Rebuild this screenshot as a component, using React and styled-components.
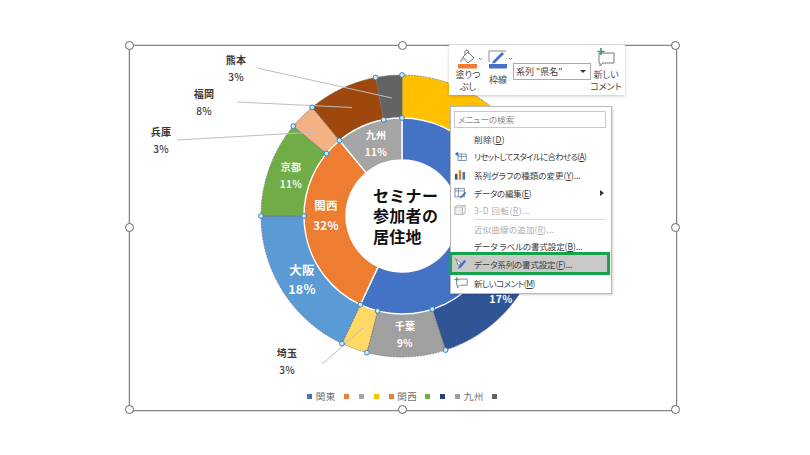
import React from 'react'
import styled, { createGlobalStyle } from 'styled-components'

const CX = 402
const CY = 216
const OUTER_R = 141
const MID_R = 98
const HOLE_R = 56

const outerSlices = [
   { pct: 28, color: '#ffc000' },
   { pct: 17, color: '#2f5597' },
   { pct: 9, color: '#a0a0a0' },
   { pct: 3, color: '#ffd966' },
   { pct: 18, color: '#5b9bd5' },
   { pct: 11, color: '#70ad47' },
   { pct: 3, color: '#f4b183' },
   { pct: 8, color: '#9e480e' },
   { pct: 3, color: '#636363' },
]

const innerSlices = [
   { pct: 57, color: '#4472c4' },
   { pct: 32, color: '#ed7d31' },
   { pct: 11, color: '#a5a5a5' },
]

const point = (r, pct) => {
   const a = (pct / 100) * Math.PI * 2
   return [CX + r * Math.sin(a), CY - r * Math.cos(a)]
}

const ringPath = (from, to, r1, r2) => {
   const large = to - from > 50 ? 1 : 0
   const [ax, ay] = point(r2, from)
   const [bx, by] = point(r2, to)
   const [cx, cy] = point(r1, to)
   const [dx, dy] = point(r1, from)
   return `M${ax} ${ay}A${r2} ${r2} 0 ${large} 1 ${bx} ${by}L${cx} ${cy}A${r1} ${r1} 0 ${large} 0 ${dx} ${dy}Z`
}

const withOffsets = (slices) => {
   let sum = 0
   return slices.map((s) => {
      const item = { ...s, from: sum, to: sum + s.pct }
      sum += s.pct
      return item
   })
}

const GlobalStyle = createGlobalStyle`
   html, body { margin: 0; background: #fff; }
   body { font-family: "Noto Sans CJK JP", "Noto Sans", sans-serif; color: #333; }
`

const Stage = styled.div`
   width: 810px;
   height: 455px;
   box-sizing: border-box;
   padding: 45px 0 0 129px;
   overflow: hidden;
`

const Frame = styled.div`
   position: relative;
   width: 548px;
   height: 366px;
   box-sizing: border-box;
   border: 1px solid #858585;
   box-shadow: 0 0 0 0.5px rgba(133, 133, 133, 0.5);
   display: flex;
   flex-direction: column;
`

const Chart = styled.svg`
   display: block;
   width: 545px;
   height: 340px;
   overflow: visible;
   flex: none;
`

const Handle = styled.span`
   position: absolute;
   left: ${(p) => p.$x}%;
   top: ${(p) => p.$y}%;
   width: 7px;
   height: 7px;
   margin: -5px 0 0 -5px;
   border: 1.5px solid #666;
   border-radius: 50%;
   background: #fff;
`

const Leader = styled.path`
   fill: none;
   stroke: #bdbdbd;
   stroke-width: 1;
`

const Marker = styled.circle`
   fill: #d6e6f5;
   stroke: #2e86c1;
   stroke-width: 1;
`

const Label = styled.text`
   font-size: ${(p) => p.$size || 10}px;
   font-weight: ${(p) => (p.$bold ? 700 : 500)};
   fill: ${(p) => p.$color || '#3a3a3a'};
   text-anchor: middle;
   letter-spacing: 0.3px;
`

const CenterTitle = styled.text`
   font-size: 16px;
   font-weight: 700;
   fill: #111;
   letter-spacing: 0.3px;
`

const Legend = styled.div`
   display: flex;
   align-items: center;
   justify-content: center;
   gap: 8px;
   height: 20px;
   font-size: 9.5px;
   letter-spacing: 0.5px;
   color: #707070;
`

const LegendItem = styled.span`
   display: flex;
   align-items: center;
   gap: 3.5px;
   min-width: 7px;
   &::before {
      content: '';
      width: 5px;
      height: 5px;
      background: ${(p) => p.$color};
   }
`

const Toolbar = styled.div`
   position: absolute;
   left: 319px;
   top: -1px;
   width: 176px;
   height: 50px;
   box-sizing: border-box;
   background: #fff;
   box-shadow: 0 1px 3px rgba(0, 0, 0, 0.22);
   display: flex;
   padding-left: 7px;
   font-size: 9px;
   font-feature-settings: "palt";
   color: #444;
`

const ToolButton = styled.div`
   width: ${(p) => p.$w}px;
   margin-left: ${(p) => p.$left || 0}px;
   flex: none;
   display: flex;
   flex-direction: column;
   align-items: center;
   text-align: center;
   line-height: 12px;
   padding-top: 3px;
   white-space: nowrap;
   svg { display: block; flex: none; overflow: visible; margin-bottom: ${(p) => p.$gap || 0}px; }
`

const SeriesSelect = styled.div`
   width: 78px;
   height: 17px;
   flex: none;
   box-sizing: border-box;
   margin-top: 18px;
   padding: 0 4px 0 2px;
   border: 1px solid #ababab;
   display: flex;
   align-items: center;
   justify-content: space-between;
   white-space: nowrap;
   &::after {
      content: '';
      border: 3px solid transparent;
      border-top: 3px solid #333;
      border-bottom: 0;
   }
`

const Menu = styled.div`
   position: absolute;
   left: 320px;
   top: 60px;
   width: 162px;
   height: 188px;
   box-sizing: border-box;
   padding: 4px 1px 0 1px;
   background: #fff;
   border: 1px solid #b9b9b9;
   box-shadow: 1px 1px 2px rgba(0, 0, 0, 0.18);
   font-size: 8.5px;
   font-feature-settings: "palt";
   color: #3c3c3c;
`

const SearchBox = styled.div`
   height: 17px;
   box-sizing: border-box;
   margin: 0 4px 2px 2px;
   padding-left: 3px;
   border: 1px solid #c8c8c8;
   line-height: 15px;
   color: #8a8a8a;
`

const Item = styled.div`
   position: relative;
   height: ${(p) => p.$h || 17.5}px;
   box-sizing: border-box;
   padding-left: 22px;
   display: flex;
   align-items: center;
   white-space: nowrap;
   letter-spacing: ${(p) => p.$ls || 0}px;
   color: ${(p) => (p.$off ? '#adadad' : 'inherit')};
   svg { position: absolute; left: 2px; top: 50%; transform: translateY(-50%); }
   ${(p) => p.$on && `
      height: 17px;
      margin: 0 3px 2px 0;
      background: #c8c8c8;
      outline: 3px solid #16a34a;
   `}
`

const SubArrow = styled.span`
   position: absolute;
   right: 6px;
   top: 50%;
   margin-top: -3px;
   border-left: 4px solid #333;
   border-top: 3px solid transparent;
   border-bottom: 3px solid transparent;
`

const Separator = styled.div`
   height: 1px;
   margin: 0 4px 0 22px;
   background: #dcdcdc;
`

const FillIcon = () => (
   <svg width="24" height="21" viewBox="0 0 24 21">
      <path d="M7 9 L12 4 L18 10 L12 15 Z" fill="#fff" stroke="#777" strokeWidth="1" />
      <path d="M9 7 Q8 2 11 2 Q13 2 13 6" fill="none" stroke="#777" strokeWidth="1" />
      <path d="M7 9 Q3 12 5 14 Q8 13 7 9" fill="#c9c9c9" stroke="#999" strokeWidth="0.6" />
      <rect x="2" y="16" width="19" height="4.5" fill="#ed7d31" />
      <path d="M23 10l1.5 1.5 1.5-1.5" fill="none" stroke="#777" />
   </svg>
)

const PenIcon = () => (
   <svg width="24" height="21" viewBox="0 0 24 21">
      <path d="M3 14 V3 H20" fill="none" stroke="#8a8a8a" strokeWidth="1" />
      <path d="M7 13 L16 4 L18 6 L9 15 L6 15.5 Z" fill="#4472c4" />
      <rect x="3" y="16" width="18" height="4.5" fill="#4472c4" />
      <path d="M23 10l1.5 1.5 1.5-1.5" fill="none" stroke="#777" />
   </svg>
)

const NewCommentIcon = () => (
   <svg width="24" height="20" viewBox="0 0 24 20">
      <path d="M5 5 H20 V15 H9 L6 18 V15 H5 Z" fill="#fff" stroke="#777" strokeWidth="1" />
      <path d="M7 0 V7 M3.5 3.5 H10.5" stroke="#3f9a6a" strokeWidth="1.6" />
   </svg>
)

const ResetIcon = () => (
   <svg width="13" height="11" viewBox="0 0 16 13">
      <rect x="5" y="4" width="10" height="8" fill="#fff" stroke="#5a7fa8" />
      <path d="M5 7 H15 M9 4 V12" stroke="#5a7fa8" />
      <path d="M1 4 L5 1 V7 Z" fill="#2f75b5" />
   </svg>
)

const BarsIcon = () => (
   <svg width="12" height="11" viewBox="0 0 14 13">
      <rect x="1" y="5" width="3" height="7" fill="#44546a" />
      <rect x="5.5" y="1" width="3" height="11" fill="#c98a2c" />
      <rect x="10" y="3" width="3" height="9" fill="#4472c4" />
   </svg>
)

const DataIcon = () => (
   <svg width="13" height="11" viewBox="0 0 15 13">
      <rect x="1" y="1" width="11" height="10" fill="#fff" stroke="#6d7f96" />
      <path d="M1 4 H12 M5 1 V11" stroke="#6d7f96" />
      <path d="M7 11 L13 5 L14.5 6.5 L8.5 12.5 H7 Z" fill="#4472c4" />
   </svg>
)

const CubeIcon = () => (
   <svg width="12" height="11" viewBox="0 0 14 13">
      <rect x="1" y="3" width="9" height="9" fill="#eee" stroke="#aaa" />
      <path d="M1 3 L4 1 H13 V10 L10 12 M10 3 L13 1" fill="none" stroke="#aaa" />
   </svg>
)

const FormatIcon = () => (
   <svg width="13" height="13" viewBox="0 0 15 14">
      <path d="M2 1 L8 6 L5 9 Z" fill="#fff" stroke="#777" />
      <path d="M12 2 L6 9 L4 13 L8 11 L14 4 Z" fill="#4472c4" />
   </svg>
)

const CommentIcon = () => (
   <svg width="14" height="12" viewBox="0 0 16 13">
      <path d="M3 2 H15 V9 H7 L4 12 V9 H3 Z" fill="#fff" stroke="#777" />
      <path d="M3 0 V5 M0.5 2.5 H5.5" stroke="#3f9a6a" strokeWidth="1.3" />
   </svg>
)

const handles = [
   [0, 0], [50, 0], [100, 0],
   [0, 50], [100, 50],
   [0, 100], [50, 100], [100, 100],
]

const ringLabels = [
   { x: 376, name: '九州', value: '11%', size: 10, nameY: 139, valueY: 156, color: '#fff' },
   { x: 291, name: '京都', value: '11%', size: 10, nameY: 171, valueY: 188, color: '#f2f8ea' },
   { x: 326, name: '関西', value: '32%', size: 11.5, nameY: 210, valueY: 230, color: '#fff' },
   { x: 302, name: '大阪', value: '18%', size: 12.5, nameY: 275, valueY: 294, color: '#fff' },
   { x: 405, name: '千葉', value: '9%', size: 10, nameY: 330, valueY: 347, color: '#fff' },
]

const outsideLabels = [
   { x: 236, name: '熊本', value: '3%', nameY: 64, valueY: 81 },
   { x: 204, name: '福岡', value: '8%', nameY: 98, valueY: 115 },
   { x: 161, name: '兵庫', value: '3%', nameY: 136, valueY: 153 },
   { x: 287, name: '埼玉', value: '3%', nameY: 357, valueY: 374 },
]

const legend = [
   { color: '#4472c4', text: '関東' },
   { color: '#ed7d31' },
   { color: '#a5a5a5' },
   { color: '#ffc000' },
   { color: '#ed7d31', text: '関西' },
   { color: '#70ad47' },
   { color: '#264478' },
   { color: '#9e9e9e', text: '九州' },
   { color: '#636363' },
]

export default function App() {
   const outer = withOffsets(outerSlices)
   const inner = withOffsets(innerSlices)

   return (
      <Stage>
         <GlobalStyle />
         <Frame>
            <Chart viewBox="130 46 545 340">
               {outer.map((s) => (
                  <path key={s.from} d={ringPath(s.from, s.to, MID_R, OUTER_R)} fill={s.color} stroke="#6e6e6e" strokeWidth="0.7" strokeDasharray="2 1" />
               ))}
               {inner.map((s) => (
                  <path key={s.from} d={ringPath(s.from, s.to, HOLE_R, MID_R)} fill={s.color} stroke="#fff" strokeWidth="1.4" />
               ))}
               <Leader d="M257 68 L392 98" />
               <Leader d="M237 102 L352 107.5" />
               <Leader d="M177 140 L317 132" />
               <Leader d="M322 363 Q325 363 328 359 L363 328" />
               {outer.map((s) => {
                  const [ax, ay] = point(OUTER_R, s.from)
                  const [bx, by] = point(MID_R, s.from)
                  return (
                     <g key={s.from}>
                        <Marker cx={ax} cy={ay} r="2.4" />
                        <Marker cx={bx} cy={by} r="2.4" />
                     </g>
                  )
               })}
               {ringLabels.map((l) => (
                  <g key={l.name}>
                     <Label x={l.x} y={l.nameY} $size={l.size} $bold $color={l.color}>{l.name}</Label>
                     <Label x={l.x} y={l.valueY} $size={l.size} $bold $color={l.color}>{l.value}</Label>
                  </g>
               ))}
               <Label x={501} y={303} $size={10.5} $bold $color="#fff">17%</Label>
               {outsideLabels.map((l) => (
                  <g key={l.name}>
                     <Label x={l.x} y={l.nameY} $bold>{l.name}</Label>
                     <Label x={l.x} y={l.valueY}>{l.value}</Label>
                  </g>
               ))}
               <CenterTitle>
                  <tspan x="373" y="202">セミナー</tspan>
                  <tspan x="373" y="222">参加者の</tspan>
                  <tspan x="373" y="243">居住地</tspan>
               </CenterTitle>
            </Chart>
            <Legend>
               {legend.map((l, i) => (
                  <LegendItem key={i} $color={l.color}>{l.text}</LegendItem>
               ))}
            </Legend>
            {handles.map(([x, y]) => (
               <Handle key={`${x}-${y}`} $x={x} $y={y} />
            ))}
            <Toolbar>
               <ToolButton $w={24}>
                  <FillIcon />
                  塗りつ<br />ぶし
               </ToolButton>
               <ToolButton $w={30} $left={3} $gap={5}>
                  <PenIcon />
                  枠線
               </ToolButton>
               <SeriesSelect>系列 "県名"</SeriesSelect>
               <ToolButton $w={30} $gap={1}>
                  <NewCommentIcon />
                  新しい<br />コメント
               </ToolButton>
            </Toolbar>
            <Menu>
               <SearchBox>メニューの検索</SearchBox>
               <Item $ls={0.5}>削除(<u>D</u>)</Item>
               <Item $ls={-0.75}><ResetIcon />リセットしてスタイルに合わせる(<u>A</u>)</Item>
               <Item $h={19}><BarsIcon />系列グラフの種類の変更(<u>Y</u>)...</Item>
               <Item $ls={-0.25}><DataIcon />データの編集(<u>E</u>)<SubArrow /></Item>
               <Item $off $ls={0.5}><CubeIcon />3-D 回転(<u>R</u>)...</Item>
               <Separator />
               <Item $off $ls={0.2}>近似曲線の追加(<u>R</u>)...</Item>
               <Item $ls={-0.1}>データ ラベルの書式設定(<u>B</u>)...</Item>
               <Item $on $ls={-0.15}><FormatIcon />データ系列の書式設定(<u>F</u>)...</Item>
               <Item $ls={-0.5}><CommentIcon />新しいコメント(<u>M</u>)</Item>
            </Menu>
         </Frame>
      </Stage>
   )
}
